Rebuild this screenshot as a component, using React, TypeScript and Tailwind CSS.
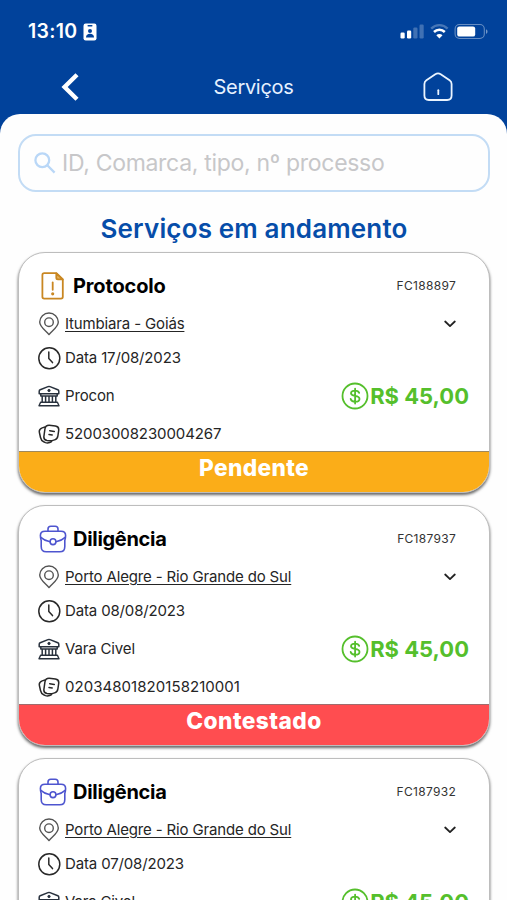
import React from 'react';

type Service = {
  kind: 'Protocolo' | 'Diligência';
  code: string;
  place: string;
  date: string;
  court: string;
  process: string;
  status: string;
  color: string;
};

const services: Service[] = [
  { kind: 'Protocolo', code: 'FC188897', place: 'Itumbiara - Goiás', date: '17/08/2023', court: 'Procon', process: '52003008230004267', status: 'Pendente', color: 'bg-[#fbad18] tracking-[0.35px]' },
  { kind: 'Diligência', code: 'FC187937', place: 'Porto Alegre - Rio Grande do Sul', date: '08/08/2023', court: 'Vara Civel', process: '02034801820158210001', status: 'Contestado', color: 'bg-[#ff4d50] tracking-[0.45px]' },
  { kind: 'Diligência', code: 'FC187932', place: 'Porto Alegre - Rio Grande do Sul', date: '07/08/2023', court: 'Vara Civel', process: '02034801820158210001', status: 'Contestado', color: 'bg-[#ff4d50] tracking-[0.45px]' },
];

function BadgeIcon() {
  return (
    <svg className="h-[18px] w-[14px]" viewBox="0 0 14 18">
      <rect x="0.5" y="0.5" width="13" height="17" rx="2.2" fill="#fff" />
      <rect x="4.5" y="2.1" width="5" height="1.3" rx="0.6" fill="#01429b" />
      <circle cx="7" cy="8" r="2" fill="#01429b" />
      <path d="M3 14.6c0-2.6 1.6-3.8 4-3.8s4 1.2 4 3.8z" fill="#01429b" />
    </svg>
  );
}

function StatusIcons() {
  return (
    <svg className="h-[18px] w-[90px]" viewBox="0 0 90 18" fill="none">
      <rect x="0.5" y="9.5" width="4.2" height="6" rx="1.2" fill="#fff" />
      <rect x="7" y="7.5" width="4.2" height="8" rx="1.2" fill="#fff" />
      <rect x="13.3" y="4.5" width="4.2" height="11" rx="1.2" fill="#fff" opacity="0.25" />
      <rect x="19.5" y="1.5" width="4.2" height="14" rx="1.2" fill="#fff" opacity="0.25" />
      <path d="M31.2 5.6a11.5 11.5 0 0 1 16.4 0" stroke="#fff" strokeOpacity="0.28" strokeWidth="2.4" />
      <path d="M34 9a7.6 7.6 0 0 1 10.8 0" stroke="#fff" strokeWidth="2.5" />
      <path d="M36.3 12.2a4.4 4.4 0 0 1 6.2 0l-3.1 3.2z" fill="#fff" />
      <rect x="55.1" y="1.5" width="29.2" height="14" rx="4.4" stroke="#fff" strokeOpacity="0.4" strokeWidth="1.1" />
      <rect x="57.2" y="3.4" width="18" height="10.2" rx="2.2" fill="#fff" />
      <path d="M86 6.2c2 .8 2 3.8 0 4.6z" fill="#fff" fillOpacity="0.45" />
    </svg>
  );
}

function HomeIcon() {
  return (
    <svg className="h-[30px] w-[30px]" viewBox="0 0 30 30" fill="none" stroke="#eaf4ff" strokeWidth="1.8" strokeLinecap="round" strokeLinejoin="round">
      <path d="M12.3 2.2 3.4 8.200Q1.400 9.600 1.400 12v11.600q0 4.400 4.400 4.400h18.400q4.400 0 4.400-4.400V12q0-2.400-2-3.800L17.700 2.200q-2.700-1.700-5.400 0z" />
      <path d="M15.300 18.200v4" />
    </svg>
  );
}

function DocumentIcon() {
  return (
    <svg className="h-[28px] w-[24px]" viewBox="0 0 24 28" fill="none" stroke="#c98722" strokeWidth="1.8" strokeLinejoin="round">
      <path d="M3.2 1.2h12.2l6.4 6.2v17.4q0 1.8-1.8 1.8H3.2q-1.8 0-1.8-1.8V3q0-1.8 1.8-1.8z" />
      <path d="M15.3 1.4v4.4q0 1.6 1.6 1.6h4.8z" fill="#e5b25c" />
      <path d="M11.7 10.4v7.4" strokeLinecap="round" />
      <circle cx="11.7" cy="21.8" r="0.7" fill="#c98722" />
    </svg>
  );
}

function BriefcaseIcon() {
  return (
    <svg className="h-[28px] w-[28px]" viewBox="0 0 28 28" fill="none" stroke="#4e55cf" strokeWidth="1.6" strokeLinecap="round" strokeLinejoin="round">
      <path d="M9 6.2V4q0-2.8 2.8-2.8h4.4Q19 1.2 19 4v2.2" />
      <path d="M6 6.2h16q4.600 0 4.600 4.200 0 2.500-.8 5.200v5.800q0 5.400-5 5.400H7.200q-5 0-5-5.400v-5.800q-.8-2.700-.8-5.200Q1.400 6.200 6 6.200z" />
      <path d="M1.800 12.400q4 3.600 9.200 4.300M26.200 12.400q-4 3.600-9.200 4.300" />
      <circle cx="14" cy="16.700" r="2.900" />
    </svg>
  );
}

function PinIcon() {
  return (
    <svg className="h-[24px] w-[22px]" viewBox="0 0 22 24" fill="none" stroke="#555" strokeWidth="1.400" strokeLinejoin="round">
      <path d="M11 22.600Q9.800 21 7.800 19.200C4.500 16.300 1.700 13.700 1.700 10.100a9.300 9.100 0 0 1 18.600 0c0 3.600-2.800 6.200-6.100 9.100Q12.200 21 11 22.600z" />
      <circle cx="11" cy="10.200" r="4.300" />
    </svg>
  );
}

function ClockIcon() {
  return (
    <svg className="h-[24px] w-[24px]" viewBox="0 0 24 24" fill="none" stroke="#292929" strokeWidth="1.500" strokeLinecap="round" strokeLinejoin="round">
      <circle cx="12.300" cy="12.300" r="10.500" />
      <path d="M11.800 6.100v6.500l3.700 4" />
    </svg>
  );
}

function CourtIcon() {
  return (
    <svg className="h-[22px] w-[22px]" viewBox="0 0 22 22" fill="none" stroke="#28313d" strokeWidth="1.500" strokeLinejoin="round">
      <path d="M1.200 8.800V6.200q0-1 1-1.400L10 1.600q1-.4 2 0l7.800 3.200q1 .4 1 1.400v2.600z" />
      <path d="M2.800 9v2h16.400V9" />
      <circle cx="11" cy="5.500" r="1.200" fill="#28313d" strokeWidth="0.800" />
      <path d="M4.200 11v6M7.600 11v6M11 11v6M14.400 11v6M17.800 11v6" />
      <path d="M2.600 17.200h16.800l1.600 3.600H1z" strokeWidth="1.400" />
    </svg>
  );
}

function FilesIcon() {
  return (
    <svg className="h-[20px] w-[22px]" viewBox="0 0 22 20" fill="none" stroke="#282828" strokeWidth="1.500" strokeLinecap="round" strokeLinejoin="round">
      <path d="m11.200 1.300 6.200.8q3.800.6 3.300 4.300l-.8 5.400q-.5 3.100-3.300 4.100-2.800 1-5.600.9l-2-.3q-3.600-.7-3.100-4.200l1-7.200q.6-3.900 4.300-3.800z" />
      <path d="M7 3 4.200 3.900Q.7 5.100 1.400 8.500l1.100 5q.7 3.100 3.200 4.300l1.800.8q2 .7 4.100-.1l1.600-.7.700-1.100" />
      <path d="m11.700 6.700 4.600.7M11 10.500l3.200.5" />
    </svg>
  );
}

function MoneyIcon() {
  return (
    <svg className="h-[28px] w-[28px]" viewBox="0 0 28 28" fill="none" stroke="#55bf2c" strokeWidth="1.800" strokeLinecap="round">
      <circle cx="14" cy="14" r="12.500" />
      <path d="M18.200 10.900c-.5-1.500-1.900-2.300-4.100-2.300-2.500 0-4.100 1.100-4.100 2.700 0 3.900 8.500 1.400 8.500 5.600 0 1.700-1.700 2.800-4.300 2.800-2.400 0-4.100-.9-4.500-2.700M14.100 6.600v15" />
    </svg>
  );
}

function ServiceCard({ service }: { service: Service }) {
  return (
    <article className="h-[241px] shrink-0 overflow-hidden rounded-[27px] border border-[#bdbdbd] bg-white pt-[13px] shadow-[0_2px_3px_rgba(0,0,0,0.6)]">
      <div className="flex h-10 items-center pr-[33px] pl-5">
        <div className="flex w-[28px] justify-center">
          {service.kind === 'Protocolo' ? <DocumentIcon /> : <BriefcaseIcon />}
        </div>
        <h2 className={`ml-[6px] flex-1 text-[20px] leading-6 font-bold text-black ${service.kind === 'Protocolo' ? 'tracking-[-0.15px]' : 'tracking-[-0.3px]'}`}>{service.kind}</h2>
        <span className="text-[12px] tracking-[0.3px] text-[#333]">{service.code}</span>
      </div>
      <div className="flex h-9 items-center pr-[33px] pl-[19px]">
        <PinIcon />
        <span className="ml-[5px] flex-1 text-[15px] leading-5 tracking-[-0.15px] underline underline-offset-2">{service.place}</span>
        <svg className="h-[12px] w-[12px]" viewBox="0 0 12 12" fill="none" stroke="#222" strokeWidth="1.800" strokeLinecap="round" strokeLinejoin="round"><path d="m1.200 3.500 4.800 4.600 4.800-4.600" /></svg>
      </div>
      <div className="flex h-8 items-center pl-[18px]">
        <ClockIcon />
        <span className="ml-[4px] text-[15px] tracking-[-0.15px]">Data {service.date}</span>
      </div>
      <div className="flex h-11 items-center pr-5 pl-[19px]">
        <CourtIcon />
        <span className="ml-[5px] flex-1 text-[15px] tracking-[-0.15px]">{service.court}</span>
        <MoneyIcon />
        <span className="ml-px text-[22px] leading-7 font-bold whitespace-nowrap text-[#55bf2c]">R$ 45,00</span>
      </div>
      <div className="mb-px flex h-8 items-center pl-[19px]">
        <FilesIcon />
        <span className={`ml-[5px] text-[15px] ${service.kind === 'Protocolo' ? 'tracking-[-0.1px]' : 'tracking-[0.05px]'}`}>{service.process}</span>
      </div>
      <div className={`flex h-[41px] justify-center border-t border-[#777]/70 pt-[2px] text-[22.7px] leading-7 font-extrabold text-white ${service.color}`}>
        {service.status}
      </div>
    </article>
  );
}

export default function App() {
  return (
    <main className="flex h-[900px] w-[507px] flex-col overflow-hidden bg-[#01429b] font-['Inter',sans-serif] text-[#252525]">
      <header className="h-[114px] shrink-0 text-white">
        <div className="flex h-16 items-center pr-[17px] pl-[28px]">
          <span className="text-[19.5px] font-semibold tracking-[0.3px]">13:10</span>
          <span className="ml-[6px]"><BadgeIcon /></span>
          <span className="ml-auto"><StatusIcons /></span>
        </div>
        <div className="grid h-[46px] grid-cols-3 items-center">
          <svg className="ml-[60px] h-[28px] w-[19px]" viewBox="0 0 19 28" fill="none" stroke="#fff" strokeWidth="4.400"><path d="M17 1.800 4.600 14 17 26.200" /></svg>
          <h1 className="text-center text-[20px] tracking-[-0.3px] text-[#e6f1ff]">Serviços</h1>
          <div className="flex justify-end pr-[54px]"><HomeIcon /></div>
        </div>
      </header>
      <section className="flex min-h-0 flex-1 flex-col overflow-hidden rounded-t-[20px] bg-[#fefefe] pt-5 pr-[17px] pl-[18px]">
        <label className="flex h-[58px] shrink-0 items-center rounded-[18px] border-2 border-[#c3dcf5] pl-[14px]">
          <svg className="h-[22px] w-[22px]" viewBox="0 0 22 22" fill="none" stroke="#b9d7f7" strokeWidth="2.300"><circle cx="8.300" cy="8.300" r="6.900" /><path d="m13.300 13.300 7.300 7.300" /></svg>
          <span className="ml-[6px] text-[23px] tracking-[-0.3px] text-[#c7c7c9]">ID, Comarca, tipo, nº processo</span>
        </label>
        <h2 className="mt-[19px] h-[41px] shrink-0 text-center text-[26px] leading-[36px] font-semibold tracking-[0.16px] whitespace-nowrap text-[#064da9]">Serviços em andamento</h2>
        <div className="flex flex-col gap-3">
          {services.map((service) => <ServiceCard key={service.code} service={service} />)}
        </div>
      </section>
    </main>
  );
}
